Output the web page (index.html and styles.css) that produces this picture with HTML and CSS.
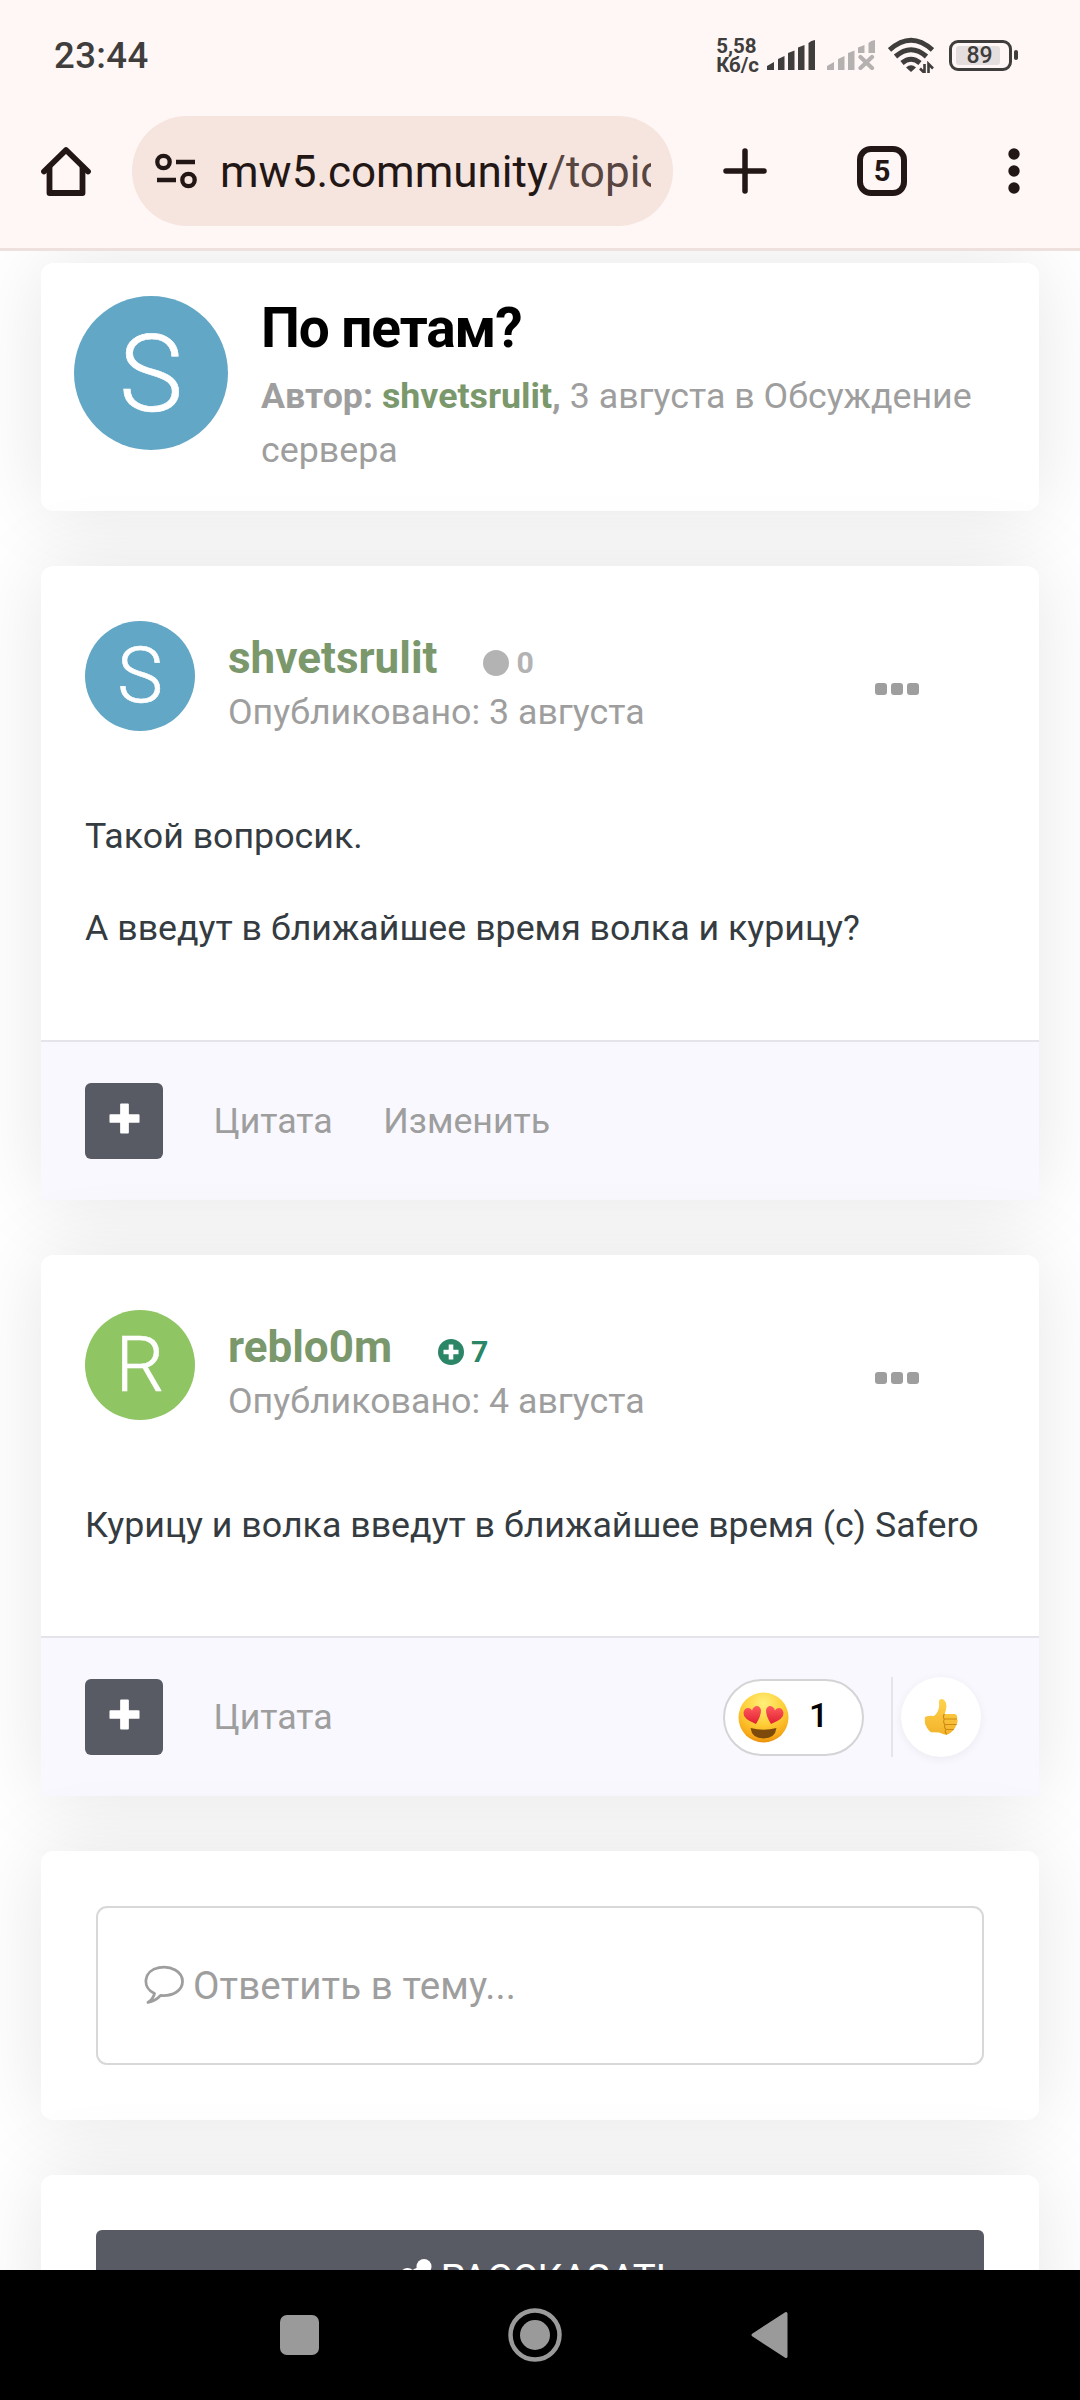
FILE: index.html
```html
<!DOCTYPE html>
<html lang="ru">
<head>
<meta charset="utf-8">
<title>По петам?</title>
<link rel="stylesheet" href="styles.css">
</head>
<body>
<div class="screen">
  <header class="browser">
    <div class="status">
      <span class="clock">23:44</span>
      <span class="speed"><span>5,58</span><span>Кб/с</span></span>
      <svg class="signal" width="48" height="30" viewBox="0 0 48 30" fill="#403d3d"><path d="M0 30V26L7 22V30ZM11 30V19L17.500 16V30ZM21 30V13L27.500 10.500V30ZM31 30V7.500L37.500 5V30ZM41.500 30V3Q44 .5 48 0V30Z"/></svg>
      <svg class="signal signal-off" width="48" height="30" viewBox="0 0 48 30" fill="#b6b1b1"><path d="M0 30V26L7 22V30ZM11 30V19L17.500 16V30ZM21 30V13L27.500 10.500V30ZM31 13V7.500L37.500 5V13ZM41.500 13V3Q44 .5 48 0V13Z"/><path d="M33.500 17L45 28M45 17L33.500 28" stroke="#b6b1b1" stroke-width="4.200" stroke-linecap="round"/></svg>
      <svg class="wifi" width="46" height="36" viewBox="0 0 46 36" fill="none" stroke="#403d3d" stroke-width="5"><path d="M1.500 13Q23-6.500 44.500 13M7.500 19.500Q23 6 38.500 19.500M14 26Q23 18.500 32 26"/><path d="M18 30.500Q23 26 28 30.500L23 35Z" fill="#403d3d" stroke="none"/><path d="M36.500 27V36L32 31.500M40.500 36V27L45 31.500" stroke-width="2.600"/></svg>
      <span class="battery"><span class="battery-body"><span class="battery-level">89</span></span><span class="battery-tip"></span></span>
    </div>
    <div class="toolbar">
      <svg class="home" width="50" height="50" viewBox="0 0 50 50" fill="none" stroke="#231716" stroke-width="5.800" stroke-linecap="round" stroke-linejoin="round"><path d="M3 25.500L25 4L47 25.500"/><path d="M8.500 21V47H41.500V21" /></svg>
      <div class="address">
        <svg class="tune" width="42" height="36" viewBox="0 0 42 36" fill="none" stroke="#231716" stroke-width="4.300"><circle cx="8.500" cy="9" r="6.200"/><path d="M21 9H40M2 27H21"/><circle cx="33.500" cy="27" r="6.200"/></svg>
        <div class="url"><span class="host">mw5.community</span>/topic</div>
      </div>
      <svg class="new-tab" width="44" height="46" viewBox="0 0 44 46" stroke="#231716" stroke-width="5.500" stroke-linecap="round"><path d="M22 3V43M3 23H41"/></svg>
      <span class="tabs">5</span>
      <svg class="more" width="12" height="46" viewBox="0 0 12 46" fill="#231716"><circle cx="6" cy="6" r="5.700"/><circle cx="6" cy="23" r="5.700"/><circle cx="6" cy="40" r="5.700"/></svg>
    </div>
  </header>

  <main class="page">
    <section class="card topic">
      <span class="avatar avatar-large">S</span>
      <div class="topic-text">
        <h1>По петам?</h1>
        <p class="byline"><b>Автор: </b><a>shvetsrulit</a><b>,</b> 3 августа в Обсуждение сервера</p>
      </div>
    </section>

    <article class="card post">
      <div class="post-head">
        <span class="avatar">S</span>
        <div class="who">
          <div class="name-row"><a class="name">shvetsrulit</a>
            <span class="rep"><svg width="26" height="26" viewBox="0 0 26 26"><circle cx="13" cy="13" r="13" fill="#b3b3b3"/></svg>0</span></div>
          <div class="date">Опубликовано: 3 августа</div>
        </div>
        <span class="menu"><i></i><i></i><i></i></span>
      </div>
      <div class="post-body"><p>Такой вопросик.</p><p>А введут в ближайшее время волка и курицу?</p></div>
      <footer class="post-foot">
        <span class="multi"><svg width="31" height="31" viewBox="0 0 32 32"><path d="M12.500 1.500H19.500V30.500H12.500ZM1.500 12.500H30.500V19.500H1.500Z" fill="#fff" stroke="#fff" stroke-width="2" stroke-linejoin="round"/></svg></span>
        <a>Цитата</a><a>Изменить</a>
      </footer>
    </article>

    <article class="card post post-short">
      <div class="post-head">
        <span class="avatar avatar-green">R</span>
        <div class="who">
          <div class="name-row"><a class="name">reblo0m</a>
            <span class="rep rep-plus"><svg width="26" height="26" viewBox="0 0 26 26"><circle cx="13" cy="13" r="13" fill="#2b8567"/><path d="M13 5.500V20.500M5.500 13H20.500" stroke="#fff" stroke-width="4.600"/></svg>7</span></div>
          <div class="date">Опубликовано: 4 августа</div>
        </div>
        <span class="menu"><i></i><i></i><i></i></span>
      </div>
      <div class="post-body"><p>Курицу и волка введут в ближайшее время (с) Safero</p></div>
      <footer class="post-foot">
        <span class="multi"><svg width="31" height="31" viewBox="0 0 32 32"><path d="M12.500 1.500H19.500V30.500H12.500ZM1.500 12.500H30.500V19.500H1.500Z" fill="#fff" stroke="#fff" stroke-width="2" stroke-linejoin="round"/></svg></span>
        <a>Цитата</a>
        <span class="reactions">
          <span class="reaction-count">
            <svg width="51" height="51" viewBox="0 0 51 51">
              <defs>
                <radialGradient id="face" cx=".5" cy=".22" r=".8"><stop offset="0" stop-color="#fff07a"/><stop offset=".5" stop-color="#ffd03a"/><stop offset=".85" stop-color="#f8aa18"/><stop offset="1" stop-color="#e88a0a"/></radialGradient>
                <linearGradient id="heart" x1="0" y1="0" x2="0" y2="1"><stop offset="0" stop-color="#ff5c5c"/><stop offset="1" stop-color="#e01f33"/></linearGradient>
              </defs>
              <circle cx="25.500" cy="25.500" r="25" fill="url(#face)"/>
              <path d="M12.500 36Q25.500 39.500 38.500 36Q37 46.500 25.500 46.500Q14 46.500 12.500 36Z" fill="#7d4a0c"/>
              <path d="M18 32Q5 27 5.500 21C6 15.500 11.500 14.500 14 18.500C15.500 12.500 22.500 12.500 23 18.500Q23 24 18 32Z" fill="url(#heart)"/>
              <path d="M33 32Q28 24 28 18.500C28.500 12.500 35.500 12.500 37 18.500C39.500 14.500 45 15.500 45.500 21Q46 27 33 32Z" fill="url(#heart)"/>
            </svg>
            <span>1</span>
          </span>
          <span class="react">
            <svg width="34" height="38" viewBox="0 0 34 38">
              <defs><linearGradient id="thumb" x1="0" y1="0" x2="0" y2="1"><stop offset="0" stop-color="#ffd34a"/><stop offset="1" stop-color="#f2b32b"/></linearGradient></defs>
              <path d="M1 19Q5 17 10 18Q16 13 15 5Q14.500 1 18 1Q22 2 22.500 8Q22 13 20.500 16L31 16Q34 17 33 21Q35 23 33 26.500Q34 30 31.500 31.500Q32.500 36 28.500 37Q21 37.500 15 34.500Q9 34 2.500 34.500Q0 27 1 19Z" fill="url(#thumb)"/>
              <path d="M20.500 16Q18.500 18 20 21L33 21M20.500 21Q18.500 24 21 26.500L33 26.500M21 26.500Q19.500 29 22 31.500H31.500M22 31.500Q20 34 23 36.500" fill="none" stroke="#cf8a14" stroke-width="1.100"/>
            </svg>
          </span>
        </span>
      </footer>
    </article>

    <section class="card reply">
      <div class="reply-box">
        <svg width="40" height="40" viewBox="0 0 40 40" fill="none" stroke="#9e9e9e" stroke-width="2.800" stroke-linejoin="round"><path d="M10.500 28.500C-2.500 22.500-.5 5.500 15 2.700C27 .5 38.500 6.500 38.500 16.500C38.500 25.500 29 31.500 16.500 30.500Q11.500 36 4 37.500Q9.500 33.500 10.500 28.500Z"/></svg>
        <span>Ответить в тему...</span>
      </div>
    </section>

    <section class="card share">
      <div class="share-btn">
        <svg width="32" height="38" viewBox="0 0 32 38" fill="#fff"><path d="M7 16.500L24 8M7 16.500L24 26" stroke="#fff" stroke-width="5"/><circle cx="24" cy="7.500" r="7.500"/><circle cx="7.500" cy="16.500" r="7.500"/><circle cx="24" cy="26" r="7.500"/></svg>
        <span>РАССКАЗАТЬ</span>
      </div>
    </section>
  </main>

  <nav class="system-nav">
    <svg width="1080" height="130" viewBox="0 0 1080 130" fill="#9a9a9a"><rect x="280" y="45" width="39" height="40" rx="7"/><circle cx="535" cy="65" r="24.500" fill="none" stroke="#9a9a9a" stroke-width="4.500"/><circle cx="535" cy="65" r="15"/><path d="M753 65L786 43.500V86.500Z" stroke="#9a9a9a" stroke-width="3" stroke-linejoin="round"/></svg>
  </nav>
</div>
</body>
</html>
```
FILE: styles.css
```css
* { box-sizing: border-box; }
body { margin: 0; background: #fff; font-family: Roboto, sans-serif; font-size: 35.75px; color: #353c41; }
h1, p { margin: 0; }
svg { display: block; flex: none; }
.screen { width: 1080px; height: 2400px; overflow: hidden; display: flex; flex-direction: column; }

.browser { flex: none; height: 251px; background: #fff7f5; border-bottom: 3px solid #eee0dc; }
.status { height: 110px; padding: 0 62px 0 54px; display: flex; align-items: center; color: #403d3d; }
.clock { font-size: 36.5px; font-weight: 500; letter-spacing: .4px; margin-right: auto; }
.speed { display: flex; flex-direction: column; font-size: 20.5px; line-height: 18.5px; font-weight: 700; margin-right: 8px; padding-top: 1px; }
.signal { margin-right: 12px; }
.signal-off { margin-right: 13px; }
.wifi { margin-right: 15px; }
.battery { display: flex; align-items: center; gap: 2px; }
.battery-body { width: 63px; height: 31px; border: 3px solid #403d3d; border-radius: 9px; padding: 3px 9px 3px 4px; display: flex; }
.battery-level { flex: 1; background: #e4dfde; border-radius: 3px; display: flex; align-items: center; justify-content: center; font-size: 23px; line-height: 19px; font-weight: 500; padding-left: 3px; }
.battery-tip { width: 4px; height: 10px; border-radius: 2px; background: #403d3d; }

.toolbar { height: 122px; padding: 0 60px 0 41px; display: flex; align-items: center; }
.address { width: 541px; height: 110px; margin-left: 41px; border-radius: 55px; background: #f6e4de; display: flex; align-items: center; padding: 0 22px 0 23px; }
.tune { margin-right: 23px; }
.url { flex: 1; overflow: hidden; white-space: nowrap; font-size: 44px; color: #564541; line-height: 60px; padding-top: 1px; }
.host { color: #231716; }
.new-tab { margin-left: 50px; }
.tabs { width: 50px; height: 50px; margin-left: 90px; border: 6px solid #231716; border-radius: 14px; display: flex; align-items: center; justify-content: center; font-size: 29px; font-weight: 700; color: #231716; }
.more { margin-left: auto; }

.page { flex: 1; min-height: 0; overflow: hidden; padding: 12px 41px 0; display: flex; flex-direction: column; gap: 55px; }
.card { flex: none; background: #fff; border-radius: 12px; box-shadow: 0 0 82px rgba(0, 0, 0, .1); }
.avatar { flex: none; width: 110px; height: 110px; border-radius: 50%; background: #62a7c5; color: #fff; font-weight: 300; font-size: 77px; -webkit-text-stroke: .6px #fff; display: flex; align-items: center; justify-content: center; }
.avatar-green { background: #8fc563; }
.avatar-large { width: 154px; height: 154px; font-size: 108px; padding-top: 1px; }

.topic { height: 248px; padding: 32px 33px 0; display: flex; gap: 33px; }
.topic .avatar { margin-top: 1px; }
h1 { font-size: 55px; line-height: 66px; font-weight: 700; color: #000; letter-spacing: -1.1px; }
.topic-text { flex: 1; }
.byline { line-height: 54px; color: #9e9e9e; margin-top: 8px; }
.byline a, .name { color: #7a986c; font-weight: 700; }

.post { height: 634px; display: flex; flex-direction: column; }
.post-short { height: 541px; }
.post-head { padding: 55px 120px 0 44px; display: flex; align-items: flex-start; }
.who { margin-left: 33px; flex: 1; }
.name-row { display: flex; align-items: center; line-height: 66px; padding-top: 4px; }
.name { font-size: 44px; margin-right: 46px; }
.rep { display: flex; align-items: center; gap: 7px; font-size: 30.25px; font-weight: 700; color: #b3b3b3; padding-top: 9px; line-height: 30px; }
.rep-plus { color: #2b8567; }
.date { color: #9e9e9e; line-height: 42px; }
.menu { display: flex; gap: 4px; margin-top: 62px; }
.menu i { width: 12px; height: 12px; border-radius: 3px; background: #9e9e9e; }
.post-body { padding: 75px 44px 0; line-height: 57px; display: flex; flex-direction: column; gap: 35px; }
.post-foot { margin-top: auto; height: 160px; border-top: 2px solid #e4e4ea; background: #f8f8fe; display: flex; align-items: center; padding: 0 58px 0 44px; color: #9e9e9e; }
.multi { width: 78px; height: 76px; border-radius: 6px; background: #595b64; display: flex; align-items: center; justify-content: center; padding-bottom: 6px; }
.post-foot a { margin-left: 50.5px; }
.reactions { margin-left: auto; display: flex; align-items: center; }
.reaction-count { width: 141px; height: 77px; border: 2px solid #d4d4d6; border-radius: 39px; background: #fff; display: flex; align-items: center; padding-left: 13px; gap: 20px; color: #000; font-weight: 500; font-size: 34px; margin-right: 27px; }
.reaction-count span { padding-bottom: 4px; }
.react { display: flex; align-items: center; border-left: 2px solid #e4e4ea; height: 80px; padding-left: 8px; }
.react svg { box-sizing: content-box; padding: 21px 23px; background: #fff; border-radius: 50%; box-shadow: 0 2px 10px rgba(0, 0, 0, .06); }

.reply { height: 269px; padding: 55px; }
.reply-box { height: 159px; border: 2px solid #d8d8d8; border-radius: 11px; display: flex; align-items: center; padding-left: 46px; padding-bottom: 1px; gap: 9px; font-size: 38.5px; letter-spacing: .1px; color: #9e9e9e; }
.share { height: 300px; padding: 55px; }
.share-btn { height: 96px; border-radius: 6px; background: #595b64; color: #fff; display: flex; align-items: center; justify-content: center; gap: 9px; font-size: 38.5px; }

.system-nav { flex: none; height: 130px; background: #000; }
```
